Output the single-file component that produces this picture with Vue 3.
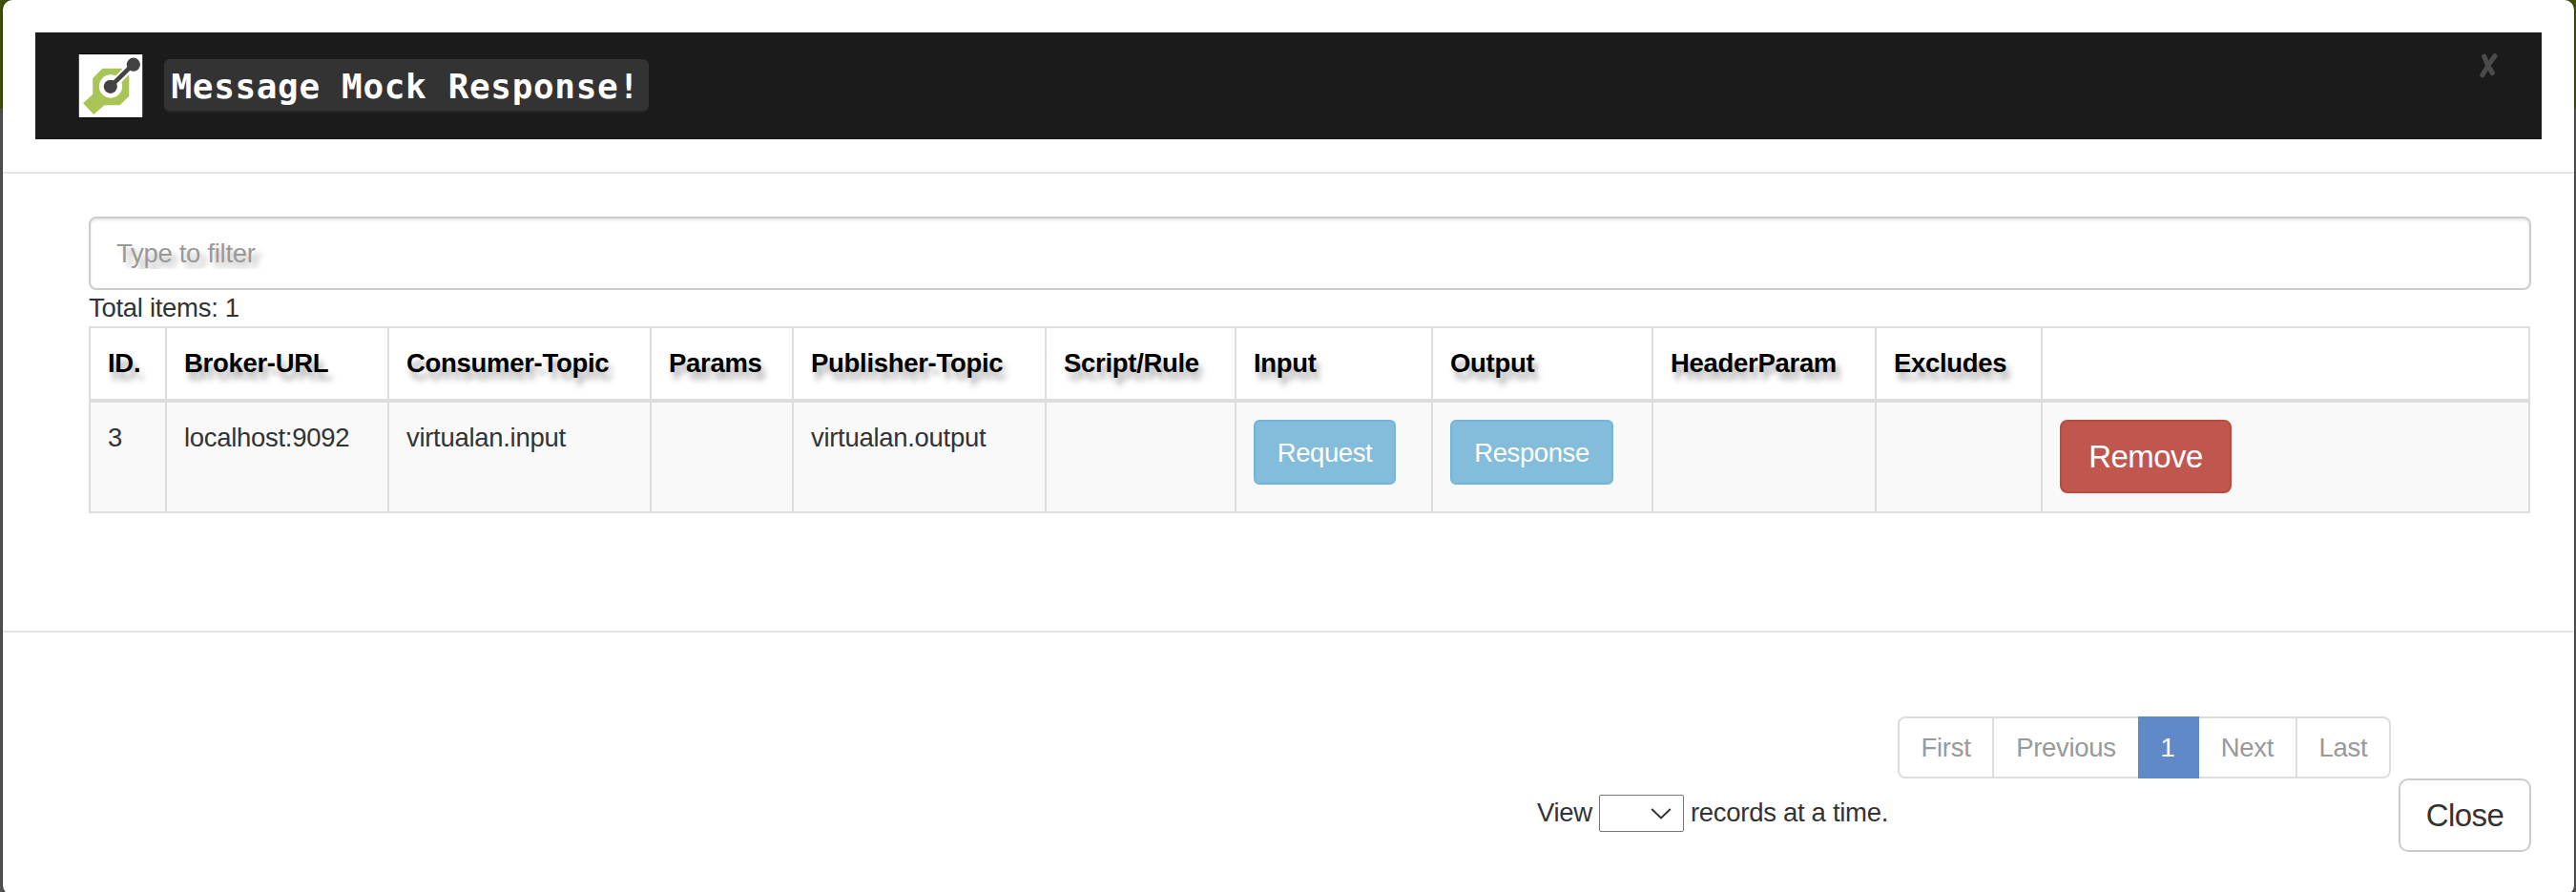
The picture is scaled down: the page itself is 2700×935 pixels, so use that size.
<script setup>
const columns = [
  { title: 'ID.', width: 80 },
  { title: 'Broker-URL', width: 233 },
  { title: 'Consumer-Topic', width: 275 },
  { title: 'Params', width: 149 },
  { title: 'Publisher-Topic', width: 265 },
  { title: 'Script/Rule', width: 199 },
  { title: 'Input', width: 206 },
  { title: 'Output', width: 231 },
  { title: 'HeaderParam', width: 234 },
  { title: 'Excludes', width: 174 },
  { title: '', width: 511 },
]
const rows = [
  { id: 3, broker: 'localhost:9092', consumer: 'virtualan.input', publisher: 'virtualan.output' },
]
</script>

<template>
  <div class="backdrop">
    <div class="navstrip"></div>
    <section class="modal">
      <header class="modal-header">
        <div class="title-bar">
          <svg class="logo" viewBox="0 0 67 67">
            <rect width="67" height="67" fill="#000" />
            <rect x="0.7" y="1" width="65.6" height="65" fill="#fff" />
            <path d="M25 15.500H46L52.500 23V44L43 53.500H27L16 63L5 51.500L15 42V25.500Z" fill="#a9c457" />
            <circle cx="33.500" cy="34" r="12" fill="#fff" />
            <path d="M34 34L57 11" stroke="#fff" stroke-width="9" />
            <path d="M33.500 34L57 11" stroke="#434345" stroke-width="4.600" />
            <circle cx="33.300" cy="34.300" r="7" fill="#434345" />
            <circle cx="57" cy="11.500" r="7" fill="#434345" />
          </svg>
          <code class="title">Message Mock Response!</code>
          <button class="dismiss" aria-label="Dismiss">
            <svg width="20" height="26" viewBox="0 0 20 26" fill="none" stroke="#4b4b4b" stroke-linecap="round">
              <path d="M16 2.600Q8.500 12 2.900 22.800" stroke-width="5" />
              <path d="M4.800 3.300Q8.300 13 13.400 20.400" stroke-width="5.200" />
            </svg>
          </button>
        </div>
      </header>

      <main class="modal-body">
        <input class="filter" type="text" placeholder="Type to filter" />
        <div class="total">Total items: {{ rows.length }}</div>
        <table class="grid">
          <colgroup>
            <col v-for="c in columns" :key="c.title" :style="{ width: c.width + 'px' }" />
          </colgroup>
          <thead>
            <tr>
              <th v-for="c in columns" :key="c.title">{{ c.title }}</th>
            </tr>
          </thead>
          <tbody>
            <tr v-for="r in rows" :key="r.id">
              <td>{{ r.id }}</td>
              <td>{{ r.broker }}</td>
              <td>{{ r.consumer }}</td>
              <td></td>
              <td>{{ r.publisher }}</td>
              <td></td>
              <td><button class="btn info request">Request</button></td>
              <td><button class="btn info response">Response</button></td>
              <td></td>
              <td></td>
              <td><button class="btn large danger">Remove</button></td>
            </tr>
          </tbody>
        </table>
      </main>

      <footer class="modal-footer">
        <div class="pager-row">
          <ul class="pager">
            <li class="first">First</li>
            <li class="previous">Previous</li>
            <li class="active">1</li>
            <li class="next">Next</li>
            <li class="last">Last</li>
          </ul>
        </div>
        <div class="bottom-row">
          <div class="page-size">
            <span class="view">View</span>
            <span class="select">
              <svg width="22" height="12" viewBox="0 0 22 12" fill="none" stroke="#333" stroke-width="2">
                <path d="M1.200 1L11 10.400L20.800 1" />
              </svg>
            </span>
            <span class="records">records at a time.</span>
          </div>
          <button class="btn large plain">Close</button>
        </div>
      </footer>
    </section>
  </div>
</template>

<style>
body {
  margin: 0;
  overflow: hidden;
}
</style>

<style scoped>
* {
  box-sizing: border-box;
}
.backdrop {
  position: relative;
  width: 2700px;
  height: 935px;
  padding: 0 2px 0 3px;
  overflow: hidden;
  background: #585858;
  font-family: "Liberation Sans", Arial, sans-serif;
  font-size: 27.5px;
  letter-spacing: -0.3px;
  line-height: 38px;
  color: #333;
}
.navstrip {
  position: absolute;
  left: 0;
  top: 0;
  width: 100%;
  height: 114px;
  background: #42540b;
}
.modal {
  position: relative;
  height: 938px;
  background: #fff;
  border-radius: 10px;
  box-shadow: 0 0 4px rgba(0, 0, 0, 0.55);
}
.modal-header {
  height: 182px;
  padding: 34px 34px 0;
  border-bottom: 2px solid #e5e5e5;
}
.title-bar {
  display: flex;
  align-items: flex-start;
  height: 112px;
  padding: 22px 45px 0;
  background: #1b1b1b;
}
.logo {
  width: 68px;
  height: 68px;
  flex: none;
}
.title {
  width: 508px;
  height: 56px;
  margin: 6px 0 0 22px;
  padding-left: 7.500px;
  border-radius: 6px;
  background: #333;
  box-shadow: inset 0 -2px 0 rgba(0, 0, 0, 0.25);
  color: #fff;
  font: bold 36px/58px "DejaVu Sans Mono", monospace;
  letter-spacing: 0.650px;
  white-space: nowrap;
}
.dismiss {
  width: 20px;
  height: 26px;
  margin: 0 0 0 auto;
  padding: 0;
  border: 0;
  background: none;
}
.dismiss svg {
  display: block;
}
.modal-body {
  height: 479px;
  padding: 45px 45px 0 90px;
}
.filter {
  display: block;
  width: 2560px;
  height: 77px;
  padding: 0 27px;
  border: 2px solid #ccc;
  border-radius: 8px;
  background: #fff;
  box-shadow: inset 0 2px 3px rgba(0, 0, 0, 0.1);
  font: inherit;
  letter-spacing: inherit;
  text-shadow: 6px 6px 6px #b4b4b4;
}
.filter::placeholder {
  color: #999;
  opacity: 1;
}
.total {
  height: 38px;
}
.grid {
  width: 2559px;
  table-layout: fixed;
  border-collapse: separate;
  border-spacing: 0;
  border: solid #ddd;
  border-width: 2px 0 0 2px;
}
.grid th,
.grid td {
  padding: 18px 0 0 18px;
  border-right: 2px solid #ddd;
  text-align: left;
  vertical-align: top;
  white-space: nowrap;
}
.grid th {
  height: 78px;
  border-bottom: 4px solid #ddd;
  color: #000;
  text-shadow: 4px 8px 6px #aaa;
}
.grid td {
  height: 116px;
  border-bottom: 2px solid #ddd;
  background: #f9f9f9;
}
.btn {
  display: block;
  padding: 0;
  border: 2px solid;
  text-align: center;
  font-family: inherit;
}
.info {
  height: 68px;
  border-radius: 6px;
  border-color: #74b4d8;
  background: #84bddc;
  color: #fff;
  font-size: 27.5px;
  letter-spacing: -0.4px;
  line-height: 63px;
}
.request {
  width: 149px;
}
.response {
  width: 171px;
}
.large {
  height: 77px;
  border-radius: 10px;
  font-size: 33px;
  letter-spacing: -0.6px;
  line-height: 73px;
}
.danger {
  width: 180px;
  border-color: #b94a3c;
  border-radius: 8px;
  background: #bf574e;
  color: #fff;
}
.plain {
  width: 139px;
  border-color: #ccc;
  background: #fff;
  color: #333;
}
.modal-footer {
  height: 277px;
  padding: 88px 45px 0 0;
  border-top: 2px solid #e5e5e5;
}
.pager-row {
  display: flex;
  justify-content: flex-end;
  padding-right: 147px;
}
.pager {
  display: flex;
  width: 517px;
  height: 65px;
  margin: 0;
  padding: 0;
  list-style: none;
  border-radius: 8px;
  color: #999;
  line-height: 61px;
  text-align: center;
}
.pager li {
  border: 2px solid #ddd;
  border-left-width: 0;
}
.pager .first {
  width: 101px;
  border-left-width: 2px;
  border-radius: 8px 0 0 8px;
}
.pager .previous {
  width: 151px;
  border-right-width: 0;
}
.pager .active {
  width: 64px;
  border-color: #5f8ac7;
  background: #5f8ac7;
  color: #fff;
}
.pager .next {
  width: 103px;
}
.pager .last {
  width: 98px;
  border-radius: 0 8px 8px 0;
}
.bottom-row {
  display: flex;
  justify-content: flex-end;
  align-items: flex-start;
}
.page-size {
  display: flex;
  width: 903px;
  padding-top: 17px;
}
.view {
  width: 65px;
}
.select {
  display: flex;
  justify-content: flex-end;
  width: 89px;
  height: 39px;
  padding: 13px 12px 0 0;
  border: 1.500px solid #767676;
  border-radius: 2px;
  background: #fff;
}
.records {
  margin-left: 7px;
}
</style>
